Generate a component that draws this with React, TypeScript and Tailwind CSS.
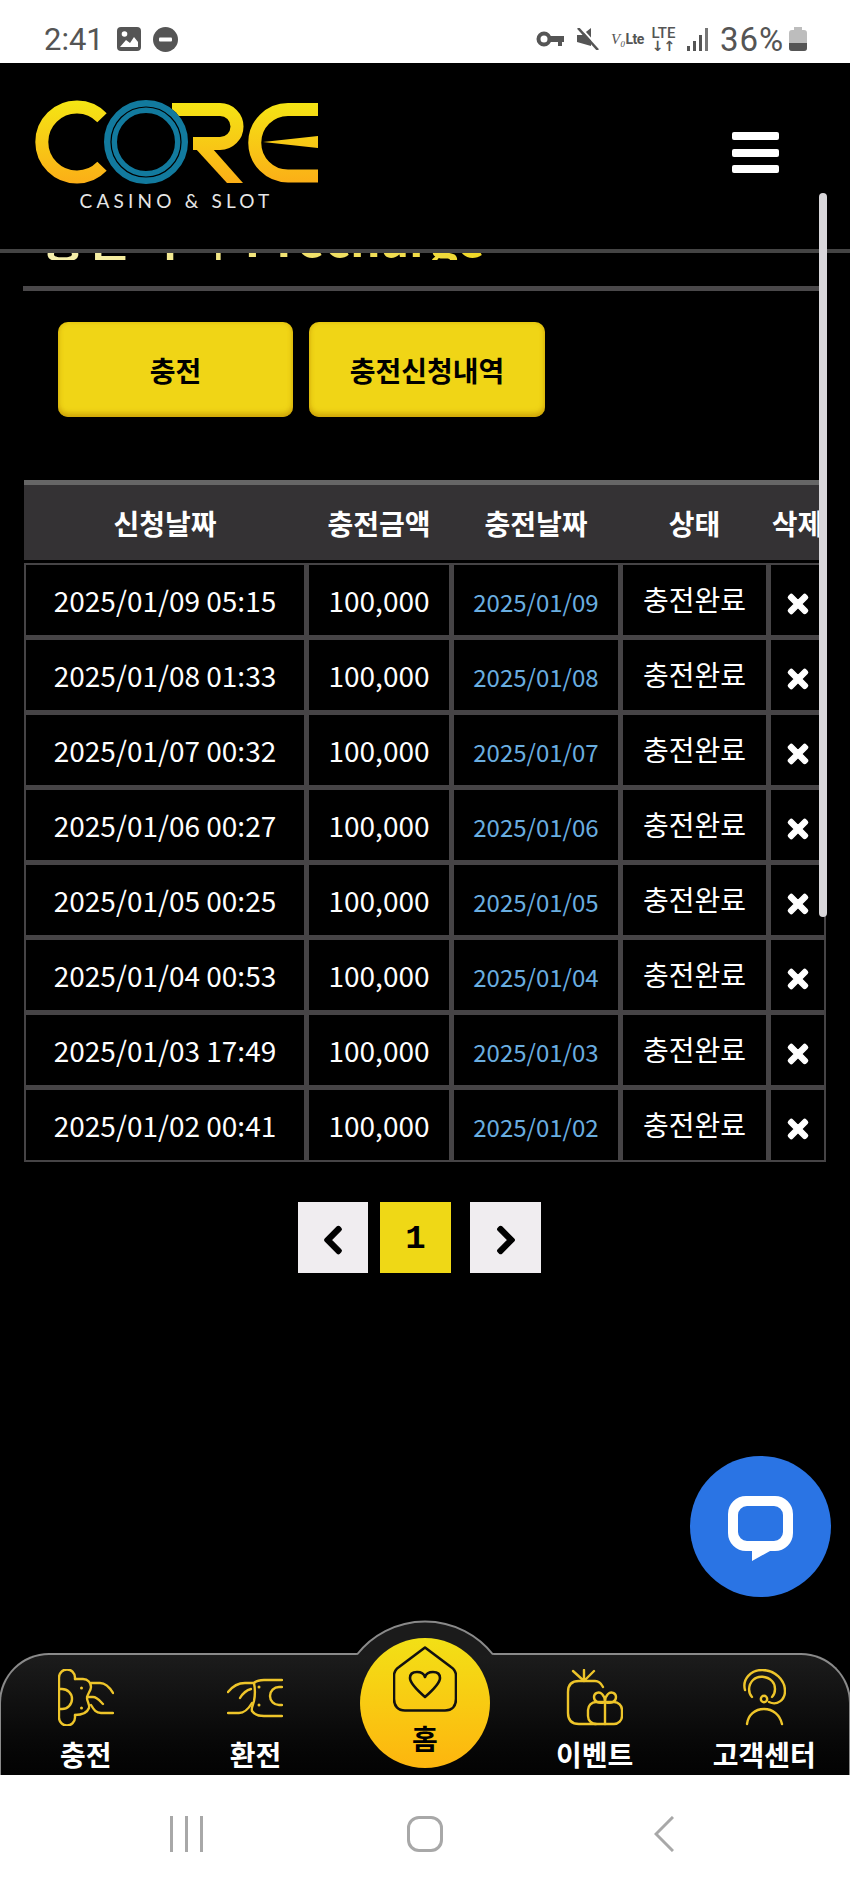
import React from "react";
import { FaChevronLeft, FaChevronRight, FaTimes } from "react-icons/fa";

const rows = [
  { requested: "2025/01/09 05:15", charged: "2025/01/09" },
  { requested: "2025/01/08 01:33", charged: "2025/01/08" },
  { requested: "2025/01/07 00:32", charged: "2025/01/07" },
  { requested: "2025/01/06 00:27", charged: "2025/01/06" },
  { requested: "2025/01/05 00:25", charged: "2025/01/05" },
  { requested: "2025/01/04 00:53", charged: "2025/01/04" },
  { requested: "2025/01/03 17:49", charged: "2025/01/03" },
  { requested: "2025/01/02 00:41", charged: "2025/01/02" },
];

const StatusBar = () => (
  <div className="h-[63px] bg-white flex items-center justify-between pl-[44px] pr-[43px] pt-[15px] text-[#555] font-['Roboto',sans-serif]">
    <div className="flex items-center">
      <span className="w-[58px] text-[31px] leading-none">2:41</span>
      <svg width="24" height="24" viewBox="0 0 24 24" className="ml-[15px]">
        <rect width="24" height="24" rx="4" fill="#555" />
        <circle cx="7.5" cy="7" r="2.8" fill="#fff" />
        <path d="M3 20 L9 13 L13 16 L17 10 L21 15 V20Z" fill="#fff" />
      </svg>
      <svg width="25" height="25" viewBox="0 0 25 25" className="ml-[12px]">
        <circle cx="12.5" cy="12.5" r="12.5" fill="#555" />
        <rect x="6" y="10.5" width="13" height="4" rx="1" fill="#fff" />
      </svg>
    </div>
    <div className="flex items-center">
      <svg width="28" height="16" viewBox="0 0 28 16" fill="none">
        <circle cx="8" cy="8" r="5.5" stroke="#555" strokeWidth="4" />
        <path d="M14 5 H28 V11 H26 V15 H22 V11 H14Z" fill="#555" />
      </svg>
      <svg width="24" height="22" viewBox="0 0 24 22" className="ml-[12px]">
        <path d="M1 7 H6 L15 0 V18 L1 14Z" fill="#555" />
        <path d="M5 0 L24 21" stroke="#fff" strokeWidth="2" />
        <path d="M2 0 L22 22" stroke="#555" strokeWidth="2.6" />
      </svg>
      <span className="ml-[11px] w-[33px] flex items-baseline leading-none text-[#555] whitespace-nowrap">
        <span className="font-['Liberation_Serif',serif] italic text-[15px]">V₀</span>
        <span className="font-bold text-[14px] tracking-[-0.5px]">Lte</span>
      </span>
      <span className="ml-[7px] w-[25px] flex flex-col items-center leading-none">
        <span className="text-[15px] font-medium leading-[13px]">LTE</span>
        <span className="text-[14px] font-bold leading-[12px] font-['DejaVu_Sans',sans-serif]">↓↑</span>
      </span>
      <svg width="21" height="23" viewBox="0 0 21 23" className="ml-[11px]">
        <rect x="0" y="18" width="3" height="5" fill="#555" />
        <rect x="6" y="13" width="3" height="10" fill="#555" />
        <rect x="12" y="7" width="3" height="16" fill="#555" />
        <rect x="18" y="0" width="3" height="23" fill="#777" />
      </svg>
      <span className="ml-[12px] w-[65px] text-[33px] tracking-[1px] leading-none whitespace-nowrap">36%</span>
      <svg width="18" height="24" viewBox="0 0 18 24" className="ml-[4px]">
        <path d="M5 0 H13 V3 H15 A3 3 0 0 1 18 6 V21 A3 3 0 0 1 15 24 H3 A3 3 0 0 1 0 21 V6 A3 3 0 0 1 3 3 H5Z" fill="#bdbdbd" />
        <path d="M0 16 H18 V21 A3 3 0 0 1 15 24 H3 A3 3 0 0 1 0 21Z" fill="#555" />
      </svg>
    </div>
  </div>
);

const Logo = () => (
  <svg width="283" height="84" viewBox="0 0 283 84" fill="none">
    <defs>
      <linearGradient id="coreGold" gradientUnits="userSpaceOnUse" x1="0" y1="0" x2="0" y2="84">
        <stop offset="0" stopColor="#f4e614" />
        <stop offset="1" stopColor="#fbae17" />
      </linearGradient>
    </defs>
    <path d="M67 17.7 A35 35 0 1 0 67 66.3" stroke="url(#coreGold)" strokeWidth="13" />
    <path d="M137 9.5 H185 A17 17 0 0 1 185 43.5 H158" stroke="url(#coreGold)" strokeWidth="13" />
    <path d="M160 48 H177 L208 83 H192Z" fill="url(#coreGold)" />
    <path d="M283 9.5 H253 A33.25 33.25 0 0 0 253 76 H283" stroke="url(#coreGold)" strokeWidth="13" />
    <path d="M228 42 L283 36 V48Z" fill="url(#coreGold)" />
    <circle cx="111" cy="42" r="42" fill="#000" />
    <circle cx="111" cy="42" r="35.5" stroke="#127a9e" strokeWidth="13" />
    <circle cx="111" cy="42" r="35" stroke="#000" strokeWidth="1.2" />
  </svg>
);

const Header = () => (
  <header className="relative z-10 h-[190px] shrink-0 bg-black border-b-4 border-[#444] flex justify-between pl-[35px] pr-[71px] pt-[37px]">
    <div className="w-[283px] flex flex-col items-center">
      <Logo />
      <span className="mt-[6px] font-['Lato',sans-serif] text-[19px] leading-[22px] tracking-[4.2px] text-[#e6e6e6] whitespace-nowrap">
        CASINO &amp; SLOT
      </span>
    </div>
    <div className="mt-[32px] w-[47px] flex flex-col gap-[8.5px]">
      <div className="h-[8px] rounded-[2px] bg-white" />
      <div className="h-[8px] rounded-[2px] bg-white" />
      <div className="h-[8px] rounded-[2px] bg-white" />
    </div>
  </header>
);

const cellClass = "bg-black border-2 border-[#464446] flex items-center justify-center";
const columns = "grid grid-cols-[282px_144px_168px_147px_57px] gap-x-px";
const yellowButton =
  "h-[95px] rounded-[10px] bg-[#f0d516] text-[28px] font-bold text-black shadow-[inset_0_-4px_5px_rgba(190,140,0,0.55),inset_0_0_5px_rgba(190,140,0,0.35)]";

const ChargeIcon = () => (
  <svg width="56" height="57" viewBox="0 0 56 57" fill="none" stroke="#eec52a" strokeWidth="2.4" strokeLinecap="round" strokeLinejoin="round">
    <path d="M17 10 V8.5 A8 8 0 0 0 1 8.5 V48.5 A8 8 0 0 0 17 48.5 V46" />
    <path d="M1 20 H4 A10 10 0 0 1 4 40 H1" />
    <path d="M17 10 H25 C30 10 33 14 33 18 C33 22 29 25 29 29 C29 33 32 35 31 39 C29 44 24 46 17 46" />
    <path d="M33 14 H42 C48 14 52 19 55 24" />
    <path d="M29 28 H35 C39 28 42 32 45 35" />
    <path d="M33 36 C36 41 38 44 43 44 H55" />
    <circle cx="23.5" cy="19" r="1.5" fill="#eec52a" stroke="none" />
    <circle cx="23.5" cy="39" r="1.5" fill="#eec52a" stroke="none" />
  </svg>
);

const ExchangeIcon = () => (
  <svg width="56" height="40" viewBox="0 0 56 40" fill="none" stroke="#eec52a" strokeWidth="2.4" strokeLinecap="round" strokeLinejoin="round">
    <path d="M55 2 H37 C32 2 29 3 27 5 H18 C10 5 5 9 1 14" />
    <path d="M55 38 H37 C31 38 27 36 25 33 C24 30 26 27 27 23 C28 18 28 10 27 5" />
    <path d="M1 35 H12 C18 35 22 30 25 25" />
    <path d="M13 20 C16 15 20 12 24 11" />
    <path d="M55 9 H52 A9 9 0 0 0 52 27 H55" />
    <circle cx="32" cy="9" r="1.5" fill="#eec52a" stroke="none" />
    <circle cx="32" cy="27" r="1.5" fill="#eec52a" stroke="none" />
  </svg>
);

const GiftIcon = () => (
  <svg width="57" height="57" viewBox="0 0 57 57" fill="none" stroke="#eec52a" strokeWidth="2.4" strokeLinecap="round" strokeLinejoin="round">
    <path d="M18 12 L7 2 M18 12 V1 M18 12 L28 2" />
    <path d="M37 18 C35 14 33 12 29 12 H13 C6 12 2 16 2 23 V44 C2 51 6 55 13 55 H30" />
    <rect x="22" y="33" width="34" height="22" rx="8" />
    <path d="M39 33 V55" />
    <path d="M39 33 C33 35 28 33 28 28 C28 24 33 22 36 25 C38 27 39 30 39 33 C39 30 40 27 42 25 C45 22 50 24 50 28 C50 33 45 35 39 33Z" />
  </svg>
);

const AgentIcon = () => (
  <svg width="44" height="57" viewBox="0 0 44 57" fill="none" stroke="#eec52a" strokeWidth="2.4" strokeLinecap="round" strokeLinejoin="round">
    <path d="M3 21 C0 10 9 1 20 1 C33 1 43 11 43 22 C43 31 35 37 27 33" />
    <path d="M10 28 C6 24 6 16 11 11 C16 6 25 7 30 12 C34 16 34 24 30 28" />
    <circle cx="22" cy="30" r="3.2" />
    <path d="M5 55 C6 46 13 40 22 40 C31 40 38 46 40 55" />
  </svg>
);

const NavItem = ({ icon, label }: { icon: React.ReactNode; label: string }) => (
  <div className="flex flex-col items-center">
    <div className="h-[57px] flex items-center justify-center">{icon}</div>
    <span className="mt-[12px] text-[28px] leading-[32px] font-bold text-white whitespace-nowrap">{label}</span>
  </div>
);

const BottomNav = () => (
  <nav className="relative shrink-0 h-[155px] pt-[33px] bg-black">
    <div className="h-[122px] rounded-t-[50px] border-t-2 border-x-2 border-[#8a8a8a] bg-gradient-to-b from-[#1c1c1c] to-[#030303] grid grid-cols-5 pt-[14px] -mx-px">
      <NavItem icon={<ChargeIcon />} label="충전" />
      <NavItem icon={<ExchangeIcon />} label="환전" />
      <div className="relative z-10 flex justify-center">
        <div className="-mt-[31px] w-[130px] h-[130px] rounded-full bg-gradient-to-b from-[#f2e016] to-[#fdb50e] flex flex-col items-center pt-[8px]">
          <svg width="64" height="66" viewBox="0 0 64 66" fill="none" stroke="#111" strokeWidth="2.6" strokeLinejoin="round">
            <path d="M32 1.5 L58 21 C61 23 63 26 63 30 V53 C63 60 59 64.5 52 64.5 H12 C5 64.5 1 60 1 53 V30 C1 26 3 23 6 21Z" />
            <path d="M32 51 C24 44 17 37 17 32 C17 27 20 26 24 26 C28 26 31 28 32 31 C33 28 36 26 40 26 C44 26 47 27 47 32 C47 37 40 44 32 51Z" />
          </svg>
          <span className="mt-[10px] text-[28px] leading-[32px] font-bold text-black">홈</span>
        </div>
      </div>
      <NavItem icon={<GiftIcon />} label="이벤트" />
      <NavItem icon={<AgentIcon />} label="고객센터" />
    </div>
    <svg width="138" height="36" viewBox="0 0 138 36" className="absolute left-[356px] top-0 z-[5]">
      <path d="M1 34.5 A86.5 86.5 0 0 1 137 34.5 V36 H1Z" fill="#1b1b1b" />
      <path d="M1 34.5 A86.5 86.5 0 0 1 137 34.5" fill="none" stroke="#8a8a8a" strokeWidth="2" />
    </svg>
  </nav>
);

const AndroidNav = () => (
  <div className="h-[114px] shrink-0 bg-white grid grid-cols-3 pt-[41px] px-[67px]">
    <div className="h-[36px] flex justify-center gap-[12px]">
      <div className="w-[3px] bg-[#a8a8a8]" />
      <div className="w-[3px] bg-[#a8a8a8]" />
      <div className="w-[3px] bg-[#a8a8a8]" />
    </div>
    <div className="h-[36px] flex justify-center">
      <div className="w-[36px] h-[36px] rounded-[12px] border-[3px] border-[#a8a8a8]" />
    </div>
    <div className="h-[36px] flex justify-center">
      <svg width="20" height="36" viewBox="0 0 20 36" fill="none" stroke="#a8a8a8" strokeWidth="3">
        <path d="M19 1 L2 18 L19 35" />
      </svg>
    </div>
  </div>
);

export default function App() {
  return (
    <div className="relative w-[850px] h-[1889px] overflow-hidden bg-black flex flex-col font-['Noto_Sans_CJK_KR',sans-serif]">
      <StatusBar />
      <Header />
      <main className="flex-1 overflow-hidden">
        <div className="h-[33px] overflow-hidden pl-[41px]">
          <div className="-mt-[41px] text-[48px] leading-[48px] font-bold whitespace-nowrap w-fit [word-spacing:8px] bg-gradient-to-r from-[#f5f0b0] to-[#f0d820] bg-clip-text text-transparent">
            충전 구 | Precharge
          </div>
        </div>
        <div className="ml-[23px] w-[803px] h-[5px] bg-[#4a484a]" />
        <div className="mt-[31px] ml-[58px] flex gap-[16px]">
          <button className={`w-[235px] ${yellowButton}`}>충전</button>
          <button className={`w-[236px] ${yellowButton}`}>충전신청내역</button>
        </div>
        <div className="mt-[63px] ml-[24px] w-[802px]">
          <div className={`${columns} h-[80px] border-t-[5px] border-[#666] bg-[#343234] text-[28px] font-bold text-white`}>
            <div className="flex items-center justify-center">신청날짜</div>
            <div className="flex items-center justify-center">충전금액</div>
            <div className="flex items-center justify-center">충전날짜</div>
            <div className="flex items-center justify-center">상태</div>
            <div className="flex items-center justify-center whitespace-nowrap">삭제</div>
          </div>
          <div className="mt-[3px] flex flex-col gap-y-px bg-[#464446]">
            {rows.map((row) => (
              <div key={row.requested} className={`${columns} h-[74px] text-[28px] text-white`}>
                <div className={cellClass}>{row.requested}</div>
                <div className={cellClass}>100,000</div>
                <div className={`${cellClass} text-[24px] text-[#6aaee0] pt-[3px]`}>{row.charged}</div>
                <div className={`${cellClass} pb-[2px]`}>충전완료</div>
                <div className={`${cellClass} pt-[8px]`}>
                  <FaTimes size={28} stroke="currentColor" strokeWidth={24} className="text-white" />
                </div>
              </div>
            ))}
          </div>
        </div>
        <div className="mt-[40px] ml-[298px] flex">
          <div className="w-[70px] h-[71px] bg-[#f0edf0] flex items-center justify-center pt-[5px]">
            <FaChevronLeft size={32} stroke="currentColor" strokeWidth={20} className="text-black" />
          </div>
          <div className="ml-[12px] w-[71px] h-[71px] bg-[#efd816] flex items-center justify-center pt-[3px] font-['Liberation_Mono',monospace] font-bold text-[34px] text-black">
            1
          </div>
          <div className="ml-[19px] w-[71px] h-[71px] bg-[#f0edf0] flex items-center justify-center pt-[5px]">
            <FaChevronRight size={32} stroke="currentColor" strokeWidth={20} className="text-black" />
          </div>
        </div>
      </main>
      <BottomNav />
      <AndroidNav />
      <div className="absolute z-20 left-[819px] top-[193px] w-[8px] h-[724px] rounded-full bg-[#d8d6da]" />
      <button className="absolute z-20 left-[690px] top-[1456px] w-[141px] h-[141px] rounded-full bg-[#2a74e4] flex items-center justify-center">
        <svg width="65" height="65" viewBox="0 0 65 65" className="mt-[4px]">
          <path
            fillRule="evenodd"
            fill="#fff"
            d="M18 0 H47 A18 18 0 0 1 65 18 V37 A18 18 0 0 1 47 55 H42 L24 65 V55 H18 A18 18 0 0 1 0 37 V18 A18 18 0 0 1 18 0Z M19 10 A9 9 0 0 0 10 19 V36 A9 9 0 0 0 19 45 H46 A9 9 0 0 0 55 36 V19 A9 9 0 0 0 46 10Z"
          />
        </svg>
      </button>
    </div>
  );
}
